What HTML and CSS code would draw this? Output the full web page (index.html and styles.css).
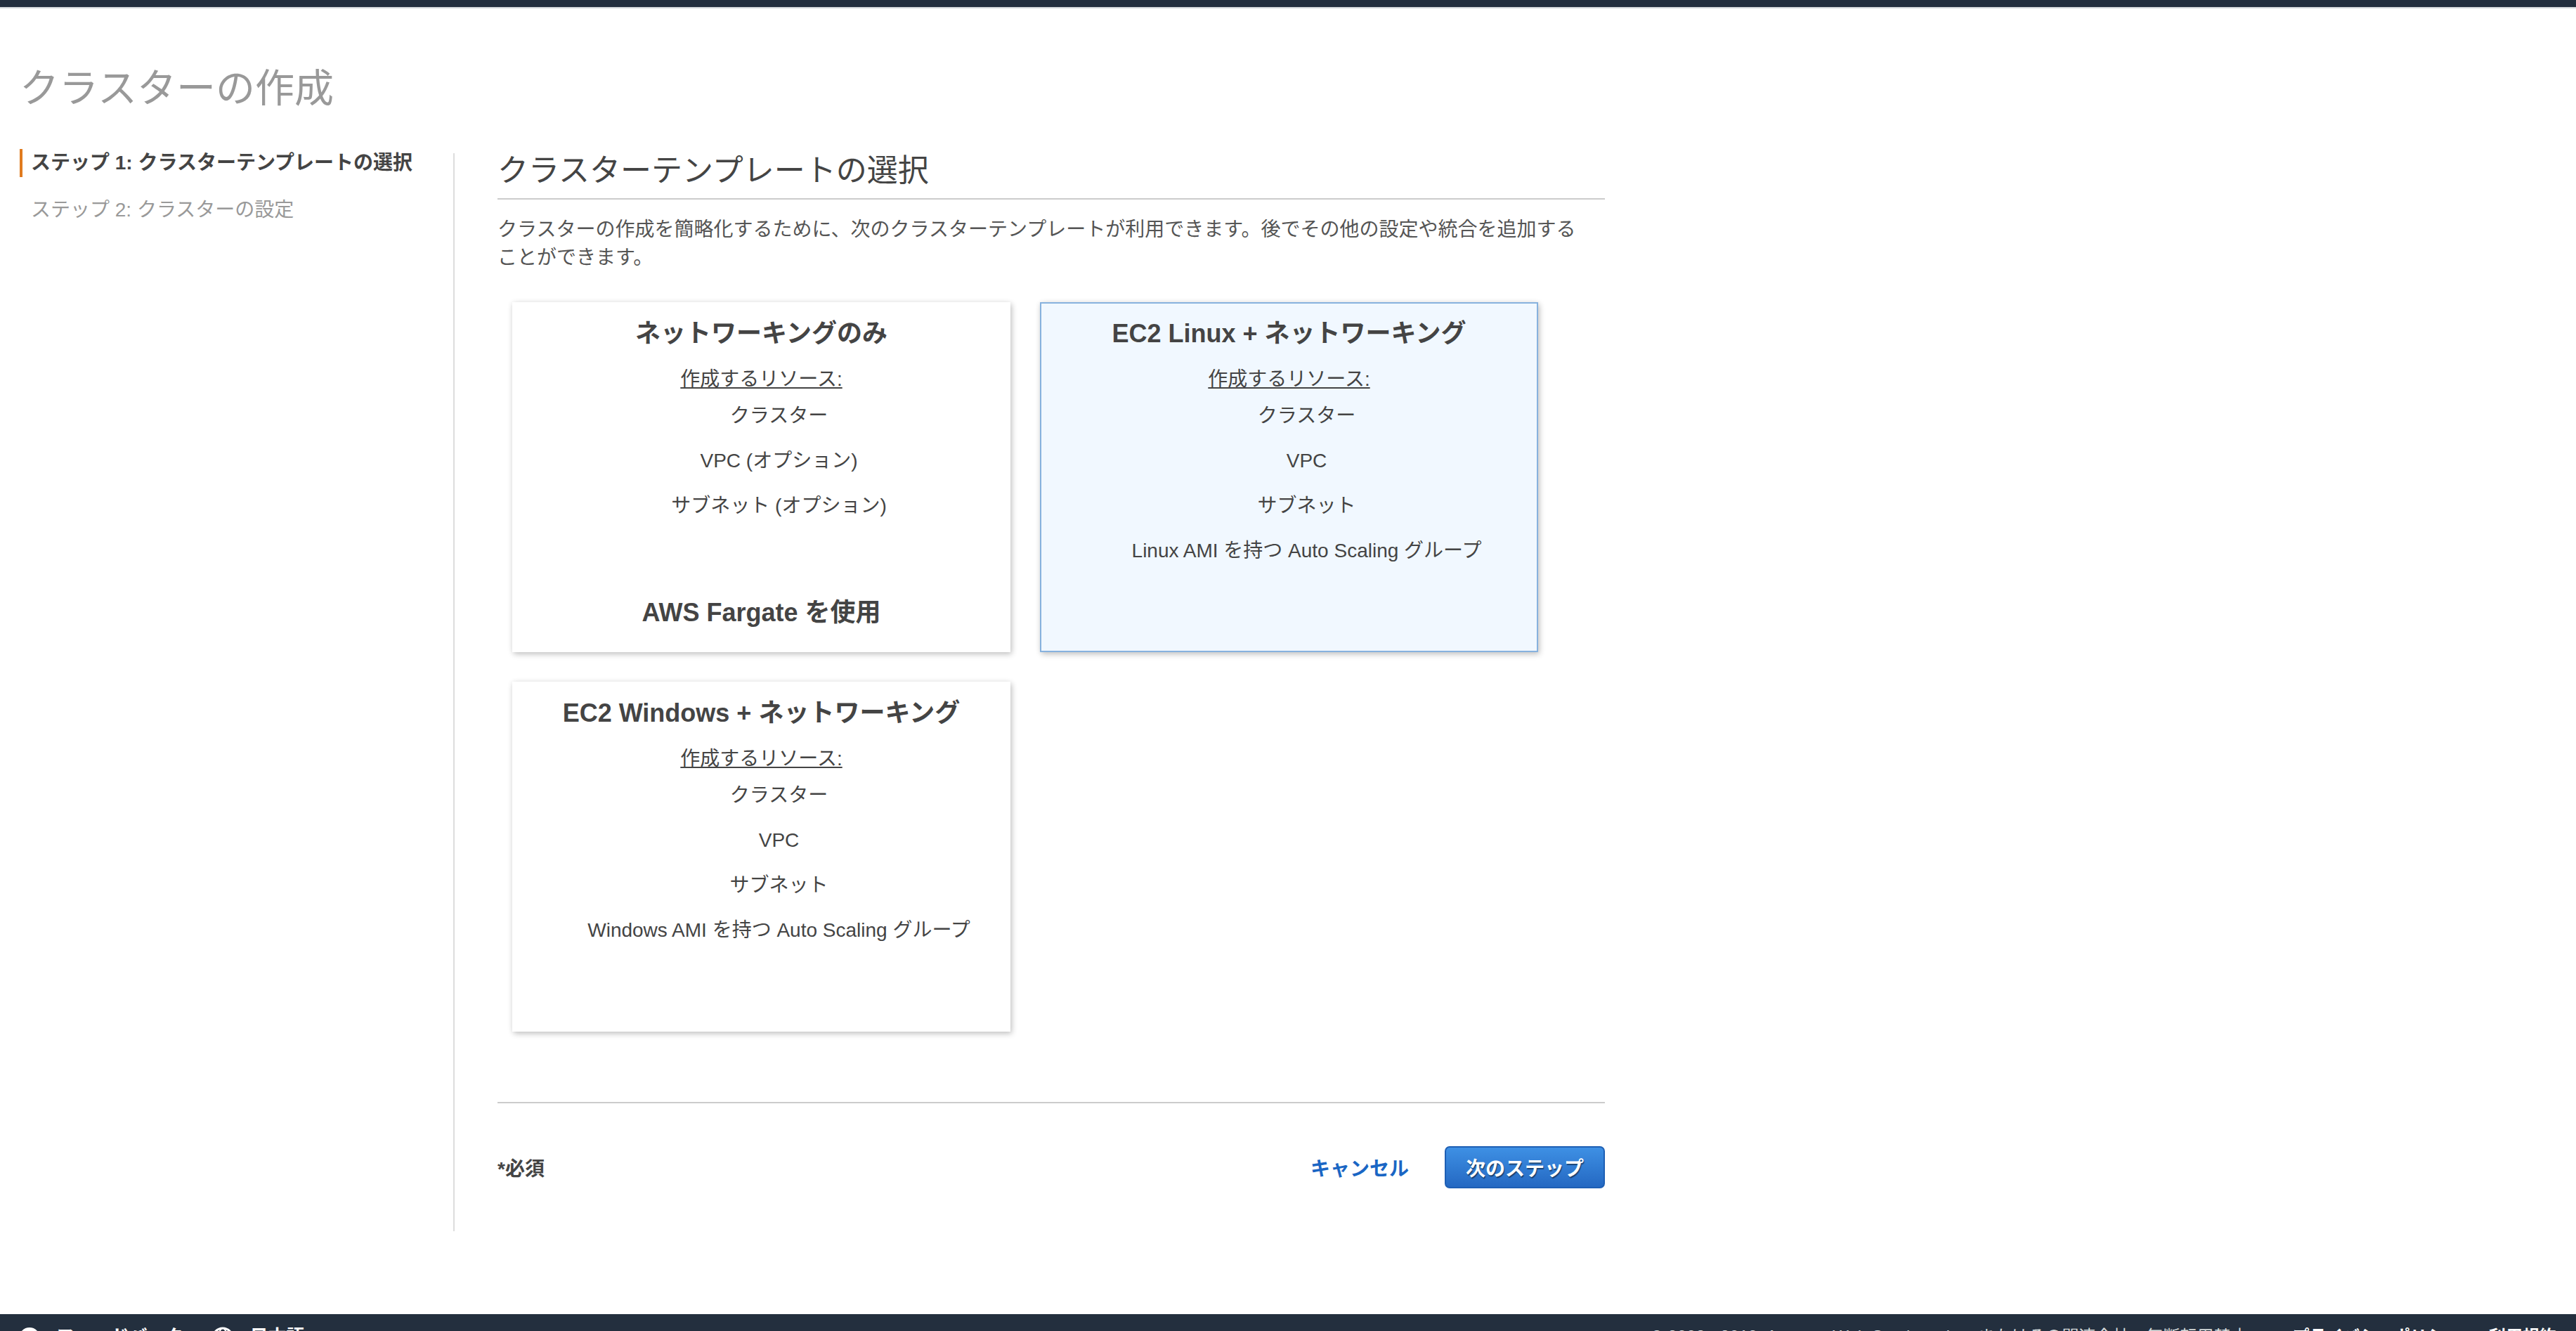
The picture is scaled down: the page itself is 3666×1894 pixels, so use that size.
FILE: index.html
```html
<!DOCTYPE html>
<html lang="ja">
<head>
    <meta charset="UTF-8">
    <meta name="viewport" content="width=device-width, initial-scale=1.0">
    <title>クラスターの作成</title>
    <link rel="stylesheet" href="styles.css">
</head>
<body>
    <div class="topbar"></div>

    <div class="page">
        <h1 class="page-title">クラスターの作成</h1>

        <div class="wizard">
            <ul class="steps">
                <li class="step active">ステップ 1: クラスターテンプレートの選択</li>
                <li class="step">ステップ 2: クラスターの設定</li>
            </ul>

            <div class="wizard-main">
                <h2 class="section-title">クラスターテンプレートの選択</h2>
                <p class="intro">クラスターの作成を簡略化するために、次のクラスターテンプレートが利用できます。後でその他の設定や統合を追加することができます。</p>

                <div class="templates">
                    <div class="template-card">
                        <div class="card-title">ネットワーキングのみ</div>
                        <div class="card-label">作成するリソース:</div>
                        <ul class="resource-list">
                            <li>クラスター</li>
                            <li>VPC (オプション)</li>
                            <li>サブネット (オプション)</li>
                        </ul>
                        <div class="card-title card-foot">AWS Fargate を使用</div>
                    </div>

                    <div class="template-card selected">
                        <div class="card-title">EC2 Linux + ネットワーキング</div>
                        <div class="card-label">作成するリソース:</div>
                        <ul class="resource-list">
                            <li>クラスター</li>
                            <li>VPC</li>
                            <li>サブネット</li>
                            <li>Linux AMI を持つ Auto Scaling グループ</li>
                        </ul>
                    </div>

                    <div class="template-card">
                        <div class="card-title">EC2 Windows + ネットワーキング</div>
                        <div class="card-label">作成するリソース:</div>
                        <ul class="resource-list">
                            <li>クラスター</li>
                            <li>VPC</li>
                            <li>サブネット</li>
                            <li>Windows AMI を持つ Auto Scaling グループ</li>
                        </ul>
                    </div>
                </div>

                <div class="wizard-actions">
                    <span class="required">*必須</span>
                    <div class="action-buttons">
                        <a class="cancel-link" href="#">キャンセル</a>
                        <button class="primary-btn">次のステップ</button>
                    </div>
                </div>
            </div>
        </div>
    </div>

    <div class="footer">
        <div class="footer-left">
            <span class="footer-item">
                <svg class="footer-icon" viewBox="0 0 32 32"><circle cx="16" cy="16" r="15" fill="#fff"/><path d="M9 11h14v9h-8l-4 3v-3H9z" fill="#232f3e"/></svg>
                フィードバック
            </span>
            <span class="footer-item">
                <svg class="footer-icon" viewBox="0 0 32 32"><circle cx="16" cy="16" r="14" fill="none" stroke="#fff" stroke-width="3"/><ellipse cx="16" cy="16" rx="6" ry="14" fill="none" stroke="#fff" stroke-width="2"/><path d="M2 16h28" stroke="#fff" stroke-width="2"/></svg>
                日本語
            </span>
        </div>
        <div class="footer-right">
            <span>© 2008 - 2019, Amazon Web Services, Inc. またはその関連会社。無断転用禁止。</span>
            <a href="#">プライバシーポリシー</a>
            <a href="#">利用規約</a>
        </div>
    </div>
</body>
</html>
```

FILE: styles.css
```css
* { margin: 0; padding: 0; box-sizing: border-box; }
html, body { height: 1894px; overflow: hidden; }
body { font-family: "Liberation Sans", "Noto Sans CJK JP", sans-serif; color: #444; background: #fff; display: flex; flex-direction: column; }

.topbar { height: 12px; background: #232f3e; border-bottom: 2px solid #d5d9dc; flex-shrink: 0; }

.page { padding: 0 28px; height: 1858px; flex-shrink: 0; }
.page-title { font-size: 56px; font-weight: normal; color: #999; line-height: 64px; margin-top: 82px; margin-bottom: 54px; }

.wizard { display: flex; align-items: flex-start; }
.steps { list-style: none; width: 617px; flex-shrink: 0; }
.step { font-size: 28px; line-height: 40px; color: #999; padding-left: 12px; border-left: 4px solid transparent; margin-bottom: 27px; }
.step.active { color: #444; font-weight: bold; border-left-color: #e07b1f; }

.wizard-main { border-left: 2px solid #ddd; margin-top: 6px; padding: 0 0 61px 61px; width: 1639px; }
.section-title { font-size: 44px; font-weight: normal; line-height: 50px; color: #444; padding-bottom: 14px; border-bottom: 2px solid #ccc; }
.intro { font-size: 28px; line-height: 40px; color: #555; margin-top: 23px; max-width: 1550px; }

.templates { display: grid; grid-template-columns: 709px 709px; gap: 42px 42px; margin: 43px 0 0 21px; }
.template-card { height: 498px; background: #fff; padding: 23px 10px 34px; display: flex; flex-direction: column; align-items: center; text-align: center; box-shadow: 2px 3px 8px rgba(0, 0, 0, 0.22), 0 0 8px rgba(0, 0, 0, 0.06); }
.template-card.selected { background: #f1f8ff; border: 2px solid #87b2de; padding-top: 21px; }
.card-title { font-size: 36px; line-height: 44px; font-weight: bold; color: #444; }
.card-foot { margin-top: auto; }
.card-label { font-size: 28px; line-height: 40px; text-decoration: underline; margin-top: 23px; }
.resource-list { list-style: none; padding-left: 50px; margin-top: 12px; }
.resource-list li { font-size: 28px; line-height: 40px; margin-bottom: 24px; }

.wizard-actions { margin-top: 100px; border-top: 2px solid #ccc; padding-top: 61px; display: flex; align-items: center; justify-content: space-between; }
.required { font-size: 28px; font-weight: bold; color: #444; }
.action-buttons { display: flex; align-items: center; gap: 51px; }
.cancel-link { font-size: 28px; font-weight: bold; color: #1a66c4; text-decoration: none; }
.primary-btn { height: 60px; padding: 0 28px; font-family: inherit; font-size: 28px; font-weight: bold; color: #fff; background: linear-gradient(#3e90e4, #2468c2); border: 2px solid #1e5fb4; border-radius: 7px; text-shadow: 1px 2px 1px rgba(0, 0, 0, 0.45); cursor: pointer; }

.footer { flex: 1; background: #232f3e; display: flex; justify-content: space-between; padding: 16px 28px 0 26px; font-size: 26px; line-height: 32px; color: #fff; }
.footer-left { display: flex; gap: 40px; }
.footer-item { display: flex; align-items: flex-start; gap: 22px; font-weight: bold; }
.footer-icon { width: 32px; height: 32px; margin-top: 2px; }
.footer-right { display: flex; gap: 40px; color: #d5dbdb; font-size: 24px; white-space: nowrap; }
.footer-right a { color: #fff; font-weight: bold; text-decoration: none; }
```
